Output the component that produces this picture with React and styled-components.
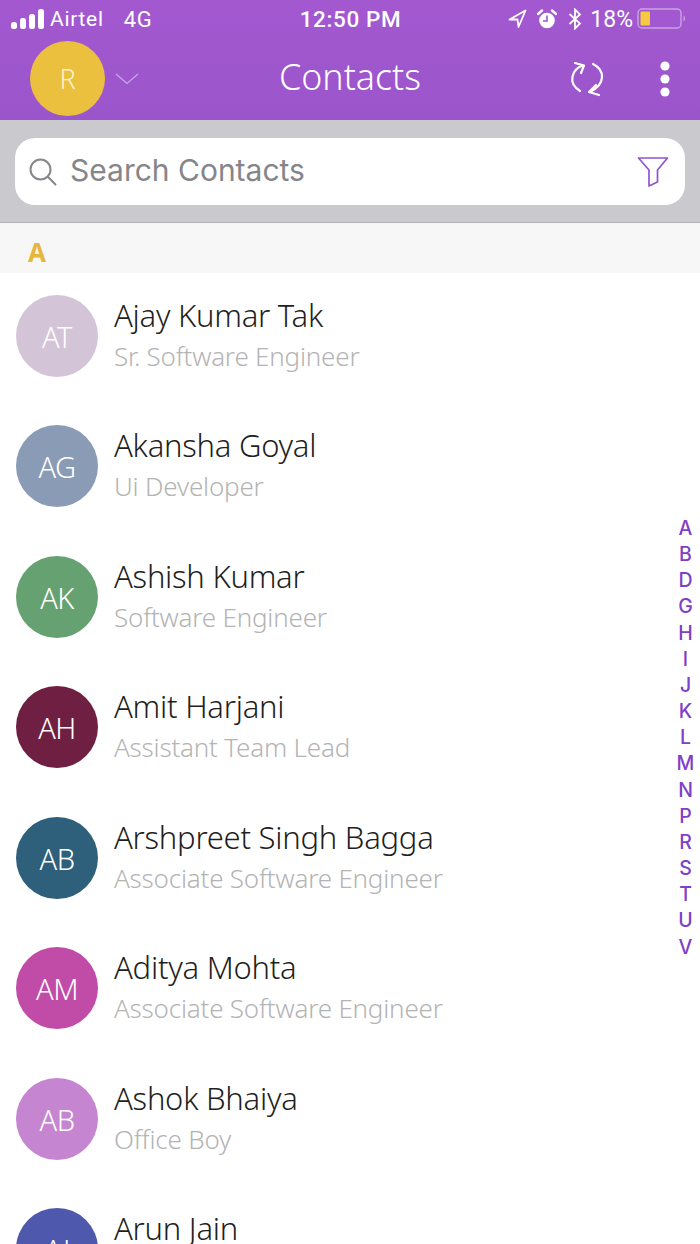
import React from 'react';
import styled, { createGlobalStyle } from 'styled-components';

const GlobalStyle = createGlobalStyle`
  html, body {
    margin: 0;
    padding: 0;
    background: #fff;
  }
`;

const Page = styled.div`
  position: relative;
  width: 700px;
  height: 1244px;
  overflow: hidden;
  background: #fff;
  font-family: "Noto Sans", sans-serif;
`;

const Header = styled.header`
  height: 120px;
  box-sizing: border-box;
  background: linear-gradient(180deg, #a358d0 0%, #9b55cb 100%);
  color: #fff;
`;

const StatusBar = styled.div`
  height: 38px;
  display: flex;
  align-items: center;
  justify-content: space-between;
  padding: 0 13px 0 11px;
`;

const StatusGroup = styled.div`
  display: flex;
  align-items: center;
  width: 220px;
  justify-content: ${p => (p.$end ? 'flex-end' : 'flex-start')};
`;

const StatusTime = styled.div`
  font: 500 22.5px Roboto, sans-serif;
  letter-spacing: 0.6px;
  margin-left: 3px;
`;

const Carrier = styled.span`
  font: 400 21px Roboto, sans-serif;
  margin-left: 6px;
  letter-spacing: 0.7px;
`;

const Network = styled(Carrier)`
  margin-left: 20px;
  font-size: 22px;
`;

const Percent = styled.span`
  font: 400 23px Roboto, sans-serif;
  margin: 0 4px 0 8px;
`;

const Toolbar = styled.div`
  height: 81px;
  display: flex;
  align-items: center;
  padding: 0 29px 0 30px;
  position: relative;
`;

const UserAvatar = styled.div`
  width: 75px;
  height: 75px;
  border-radius: 50%;
  background: #ebc03f;
  color: #fdf3c8;
  display: flex;
  align-items: center;
  justify-content: center;
  font: 300 27px "Noto Sans", sans-serif;
`;

const Title = styled.div`
  position: absolute;
  left: 0;
  right: 0;
  top: 14px;
  text-align: center;
  font: 300 35.8px "Noto Sans", sans-serif;
  color: #fff;
`;

const ToolbarActions = styled.div`
  margin-left: auto;
  display: flex;
  align-items: center;
  gap: 54px;
`;

const SearchSection = styled.div`
  height: 103px;
  box-sizing: border-box;
  padding: 18px 15px;
  background: #c9c9ce;
  border-bottom: 1px solid #b4b4b8;
`;

const SearchBox = styled.div`
  height: 67px;
  background: #fff;
  border-radius: 20px;
  display: flex;
  align-items: center;
  padding: 0 16px 0 14px;
`;

const SearchText = styled.span`
  margin: 0 0 3px 13px;
  font: 400 30px Inter, sans-serif;
  color: #85858a;
`;

const FilterButton = styled.div`
  margin-left: auto;
  display: flex;
`;

const SectionHeader = styled.div`
  height: 50px;
  box-sizing: border-box;
  padding: 14px 0 0 28px;
  background: #f7f7f7;
  color: #e6b73c;
  font: 700 26px "Noto Sans", sans-serif;
  line-height: 30px;
`;

const List = styled.div`
  padding-top: 21.8px;
`;

const Row = styled.div`
  height: 130.5px;
  box-sizing: border-box;
  display: flex;
  padding-left: 16px;
`;

const Avatar = styled.div`
  flex: none;
  width: 82px;
  height: 82px;
  box-sizing: border-box;
  padding-top: 1px;
  border-radius: 50%;
  background: ${p => p.$color};
  color: #fff;
  display: flex;
  align-items: center;
  justify-content: center;
  font: 300 29px "Noto Sans", sans-serif;
  letter-spacing: -0.5px;
`;

const RowText = styled.div`
  margin-left: 16px;
`;

const Name = styled.div`
  font: 300 31px/40px "Noto Sans", sans-serif;
  letter-spacing: -0.25px;
  color: #1f1f21;
`;

const Role = styled.div`
  font: 300 26px/36px "Noto Sans", sans-serif;
  letter-spacing: -0.2px;
  color: #b4b4b4;
  margin-top: 3px;
`;

const IndexRail = styled.div`
  position: absolute;
  top: 515px;
  right: 4px;
  width: 21px;
  display: flex;
  flex-direction: column;
  align-items: center;
  font: 500 19.5px/26.15px Inter, sans-serif;
  color: #7f3fc6;
`;

const contacts = [
  { initials: 'AT', name: 'Ajay Kumar Tak', role: 'Sr. Software Engineer', color: '#d3c4d7' },
  { initials: 'AG', name: 'Akansha Goyal', role: 'Ui Developer', color: '#8a9bb5' },
  { initials: 'AK', name: 'Ashish Kumar', role: 'Software Engineer', color: '#66a271' },
  { initials: 'AH', name: 'Amit Harjani', role: 'Assistant Team Lead', color: '#6e1f42' },
  { initials: 'AB', name: 'Arshpreet Singh Bagga', role: 'Associate Software Engineer', color: '#2e5f7b' },
  { initials: 'AM', name: 'Aditya Mohta', role: 'Associate Software Engineer', color: '#c04ca8' },
  { initials: 'AB', name: 'Ashok Bhaiya', role: 'Office Boy', color: '#c685d0' },
  { initials: 'AJ', name: 'Arun Jain', role: 'Manager', color: '#4e58ac' },
];

const letters = 'ABDGHIJKLMNPRSTUV'.split('');

const SignalBars = () => (
  <svg width="33" height="20" viewBox="0 0 33 20">
    <rect x="0" y="13" width="6" height="7" rx="2.5" fill="#fff" />
    <rect x="9" y="9" width="6" height="11" rx="2.5" fill="#fff" />
    <rect x="18" y="5" width="6" height="15" rx="2.5" fill="#fff" />
    <rect x="27" y="0" width="6" height="20" rx="2.5" fill="#fff" />
  </svg>
);

const LocationArrow = () => (
  <svg width="19" height="20" viewBox="0 0 19 20" fill="none" stroke="#fff" strokeWidth="1.8" strokeLinejoin="round">
    <path d="M1.5 10.5 L17.5 1.5 L10.5 18 L9.5 10.5 Z" />
  </svg>
);

const AlarmClock = () => (
  <svg width="20" height="20" viewBox="0 0 20 20" style={{ marginLeft: 10 }}>
    <circle cx="10" cy="11.5" r="7.8" fill="#fff" />
    <path d="M10 6.5 V12 H6" fill="none" stroke="#9d56cc" strokeWidth="1.6" />
    <path d="M1 5 L5 1.5 M19 5 L15 1.5" stroke="#fff" strokeWidth="2.4" strokeLinecap="round" />
  </svg>
);

const Bluetooth = () => (
  <svg width="14" height="22" viewBox="0 0 14 22" fill="none" stroke="#fff" strokeWidth="1.8" style={{ marginLeft: 11 }}>
    <path d="M1.5 6 L12 15.5 L7 20.5 V1.5 L12 6.5 L1.5 16" />
  </svg>
);

const Battery = () => (
  <svg width="50" height="22" viewBox="0 0 50 22">
    <rect x="1" y="1" width="43" height="19" rx="4" fill="none" stroke="#c9a3e3" strokeWidth="1.4" />
    <rect x="3.5" y="3.5" width="9.5" height="14" rx="1" fill="#f7c93e" />
    <path d="M46.5 7.5 C48.5 8 48.5 13 46.5 13.5 Z" fill="#c9a3e3" />
  </svg>
);

const Chevron = () => (
  <svg width="24" height="14" viewBox="0 0 24 14" fill="none" stroke="#cba6e6" strokeWidth="1.3" style={{ marginLeft: 10 }}>
    <path d="M1 2 L12 11.5 L23 2" />
  </svg>
);

const SyncIcon = () => (
  <svg width="36" height="36" viewBox="0 0 36 36" fill="none" stroke="#fff" strokeWidth="2.2" strokeLinecap="round" strokeLinejoin="round">
    <path d="M14 4.5 C3 8 -2 22 11 30" />
    <path d="M6 2 L15 4.5 L12 12" />
    <path d="M24 3 C36 9 37 23 21 31" />
    <path d="M27 24 L20 31 L30 34" />
  </svg>
);

const MoreDots = () => (
  <svg width="12" height="36" viewBox="0 0 12 36" fill="#fff">
    <circle cx="6" cy="5" r="4.6" />
    <circle cx="6" cy="18" r="4.6" />
    <circle cx="6" cy="31" r="4.6" />
  </svg>
);

const SearchIcon = () => (
  <svg width="28" height="28" viewBox="0 0 28 28" fill="none" stroke="#86868b" strokeWidth="2">
    <circle cx="11.5" cy="11.5" r="10" />
    <path d="M18.8 18.8 L26.5 26.5" strokeLinecap="round" />
  </svg>
);

const FilterIcon = () => (
  <svg width="32" height="32" viewBox="0 0 32 32" fill="none" stroke="#9354cb" strokeWidth="1.7" strokeLinejoin="round">
    <path d="M1.5 2 H30.5 L20.5 14 V26 L12 30 V14 Z" />
  </svg>
);

const App = () => (
  <Page>
    <GlobalStyle />
    <Header>
      <StatusBar>
        <StatusGroup>
          <SignalBars />
          <Carrier>Airtel</Carrier>
          <Network>4G</Network>
        </StatusGroup>
        <StatusTime>12:50 PM</StatusTime>
        <StatusGroup $end>
          <LocationArrow />
          <AlarmClock />
          <Bluetooth />
          <Percent>18%</Percent>
          <Battery />
        </StatusGroup>
      </StatusBar>
      <Toolbar>
        <UserAvatar>R</UserAvatar>
        <Chevron />
        <Title>Contacts</Title>
        <ToolbarActions>
          <SyncIcon />
          <MoreDots />
        </ToolbarActions>
      </Toolbar>
    </Header>
    <SearchSection>
      <SearchBox>
        <SearchIcon />
        <SearchText>Search Contacts</SearchText>
        <FilterButton><FilterIcon /></FilterButton>
      </SearchBox>
    </SearchSection>
    <SectionHeader>A</SectionHeader>
    <List>
      {contacts.map((c, i) => (
        <Row key={i}>
          <Avatar $color={c.color}>{c.initials}</Avatar>
          <RowText>
            <Name>{c.name}</Name>
            <Role>{c.role}</Role>
          </RowText>
        </Row>
      ))}
    </List>
    <IndexRail>
      {letters.map(l => <span key={l}>{l}</span>)}
    </IndexRail>
  </Page>
);

export default App;
